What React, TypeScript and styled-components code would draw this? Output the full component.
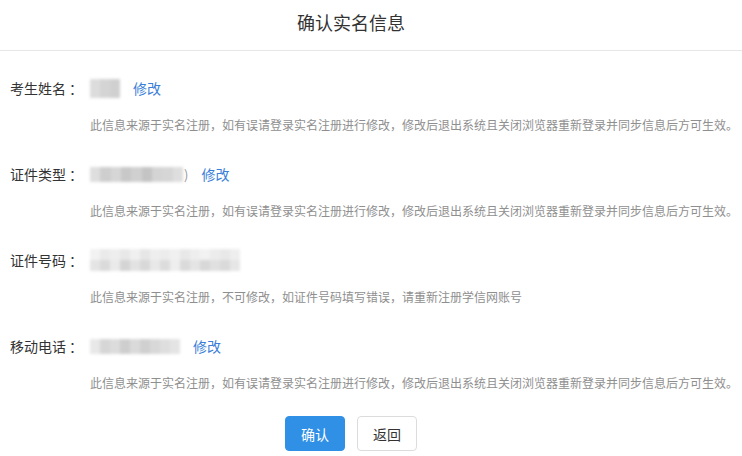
import styled, { createGlobalStyle } from "styled-components";

const GlobalStyle = createGlobalStyle`
  body {
    margin: 0;
    background: #fff;
    font-family: "Noto Sans CJK SC", "Noto Sans", sans-serif;
  }
`;

type FieldData = {
  label: string;
  mosaic: number[][];
  rowHeight: number;
  width: number;
  editable: boolean;
  tail?: string;
  hint: string;
};

const LONG_HINT =
  "此信息来源于实名注册，如有误请登录实名注册进行修改，修改后退出系统且关闭浏览器重新登录并同步信息后方可生效。";

const fields: FieldData[] = [
  {
    label: "考生姓名",
    mosaic: [[220, 212, 208]],
    rowHeight: 19,
    width: 30,
    editable: true,
    hint: LONG_HINT,
  },
  {
    label: "证件类型",
    mosaic: [[222, 206, 214, 200, 208, 196, 212, 214, 222]],
    rowHeight: 15,
    width: 93,
    editable: true,
    tail: ")",
    hint: LONG_HINT,
  },
  {
    label: "证件号码",
    mosaic: [
      [242, 234, 238, 232, 240, 230, 238, 236, 240, 232, 238, 242, 236, 232, 238],
      [228, 218, 234, 212, 226, 216, 232, 220, 238, 218, 228, 216, 224, 218, 230],
    ],
    rowHeight: 11,
    width: 150,
    editable: false,
    hint: "此信息来源于实名注册，不可修改，如证件号码填写错误，请重新注册学信网账号",
  },
  {
    label: "移动电话",
    mosaic: [[232, 214, 220, 206, 218, 208, 216, 222, 228]],
    rowHeight: 15,
    width: 90,
    editable: true,
    hint: LONG_HINT,
  },
];

const Mosaic = ({
  rows,
  width,
  rowHeight,
}: {
  rows: number[][];
  width: number;
  rowHeight: number;
}) => (
  <MosaicBox $width={width}>
    {rows.map((row, i) => (
      <MosaicRow key={i} $height={rowHeight}>
        {row.map((g, j) => (
          <MosaicCell key={j} style={{ background: `rgb(${g},${g},${g})` }} />
        ))}
      </MosaicRow>
    ))}
  </MosaicBox>
);

const App = () => {
  return (
    <Page>
      <GlobalStyle />
      <Header>
        <Title>确认实名信息</Title>
      </Header>
      <Form>
        {fields.map((f) => (
          <Field key={f.label}>
            <Row>
              <Label>
                {f.label}
                <Colon>：</Colon>
              </Label>
              <Value>
                <Mosaic rows={f.mosaic} width={f.width} rowHeight={f.rowHeight} />
                {f.tail && <Tail>{f.tail}</Tail>}
              </Value>
              {f.editable && <EditLink href="#">修改</EditLink>}
            </Row>
            <Hint>{f.hint}</Hint>
          </Field>
        ))}
      </Form>
      <Actions>
        <Button $primary>确认</Button>
        <Button>返回</Button>
      </Actions>
    </Page>
  );
};

const Page = styled.div`
  width: 742px;
  height: 456px;
  overflow: hidden;
  color: #333;
`;

const Header = styled.div`
  height: 50px;
  display: flex;
  align-items: center;
  justify-content: center;
  padding-right: 40px;
  border-bottom: 1px solid #e6e6e6;
`;

const Title = styled.h1`
  margin: 0;
  font-size: 18px;
  font-weight: normal;
  color: #333;
  line-height: 24px;
  padding-bottom: 6px;
`;

const Form = styled.div`
  padding: 27px 0 0 10px;
  display: flex;
  flex-direction: column;
  gap: 30px;
`;

const Field = styled.div`
  display: flex;
  flex-direction: column;
`;

const Row = styled.div`
  height: 20px;
  display: flex;
  align-items: center;
`;

const Label = styled.span`
  width: 80px;
  font-size: 14px;
  line-height: 20px;
  color: #333;
`;

const Colon = styled.span`
  margin-left: 3px;
`;

const Value = styled.span`
  display: flex;
  align-items: center;
`;

const MosaicBox = styled.span<{ $width: number }>`
  width: ${(p) => p.$width}px;
  display: flex;
  flex-direction: column;
  filter: blur(1.5px);
`;

const MosaicRow = styled.span<{ $height: number }>`
  display: flex;
  height: ${(p) => p.$height}px;
`;

const MosaicCell = styled.span`
  flex: 1;
`;

const Tail = styled.span`
  font-size: 13px;
  color: #999;
  margin-left: 1px;
`;

const EditLink = styled.a`
  margin-left: 13px;
  font-size: 14px;
  line-height: 20px;
  color: #3a80d8;
  text-decoration: none;
`;

const Hint = styled.p`
  margin: 18px 0 0 80px;
  font-size: 12px;
  line-height: 18px;
  color: #8f8f8f;
  white-space: nowrap;
`;

const Actions = styled.div`
  display: flex;
  justify-content: center;
  gap: 12px;
  padding-right: 40px;
  margin-top: 24px;
`;

const Button = styled.button<{ $primary?: boolean }>`
  width: 60px;
  height: 35px;
  border-radius: 4px;
  font-family: inherit;
  font-size: 14px;
  cursor: pointer;
  border: 1px solid ${(p) => (p.$primary ? "#2f90e6" : "#dcdcdc")};
  background: ${(p) => (p.$primary ? "#2f90e6" : "#fff")};
  color: ${(p) => (p.$primary ? "#fff" : "#333")};
`;

export default App;
